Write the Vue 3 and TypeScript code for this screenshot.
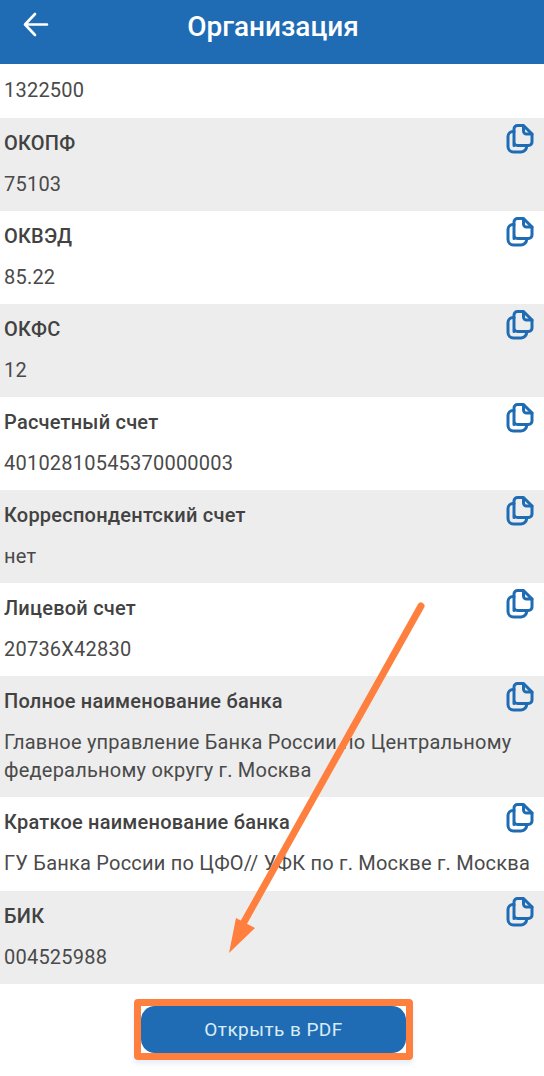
<template>
  <div class="page">
    <!-- HEADER -->
    <header class="header">
      <button class="back" aria-label="Назад">
        <svg width="28" height="28" viewBox="0 0 28 28" fill="none" stroke="#fff" stroke-width="2.6" stroke-linecap="round" stroke-linejoin="round">
          <path d="M25 13.500H3.500M13 3L3 13.500L13 24" />
        </svg>
      </button>
      <h1>Организация</h1>
    </header>

    <!-- FIELDS -->
    <div class="first">1322500</div>
    <div v-for="(row, i) in rows" :key="row.label" class="row" :class="{ shaded: i % 2 === 0 }">
      <div class="row-head">
        <span class="label">{{ row.label }}</span>
        <svg class="copy" width="28" height="30" viewBox="0 0 28 30" fill="none" stroke="#1f6cb5" stroke-width="3" stroke-linejoin="round" stroke-linecap="round">
          <path d="M8 21.500V5a3.500 3.500 0 0 1 3.500-3.500h6L26 10v8a3.500 3.500 0 0 1-3.500 3.500h-11A3.500 3.500 0 0 1 8 18Z" />
          <path d="M17.500 2v5a3 3 0 0 0 3 3H26" />
          <path d="M8 7.500H7A5 5 0 0 0 2 12.500v10A5.500 5.500 0 0 0 7.500 28H15a5.500 5.500 0 0 0 5.500-6.500" />
        </svg>
      </div>
      <div class="value">{{ row.value }}</div>
    </div>

    <!-- ACTIONS -->
    <div class="actions">
      <div class="frame">
        <button class="pdf">Открыть в PDF</button>
      </div>
    </div>

    <!-- ANNOTATION ARROW -->
    <svg class="arrow" width="544" height="1076" viewBox="0 0 544 1076">
      <path d="M421 606L244 922" fill="none" stroke="#ff7f3f" stroke-width="7" stroke-linecap="round" />
      <path d="M229 953L236 918L255 928Z" fill="#ff7f3f" />
    </svg>
  </div>
</template>

<script setup lang="ts">
interface Row {
  label: string;
  value: string;
}

const rows: Row[] = [
  { label: "ОКОПФ", value: "75103" },
  { label: "ОКВЭД", value: "85.22" },
  { label: "ОКФС", value: "12" },
  { label: "Расчетный счет", value: "40102810545370000003" },
  { label: "Корреспондентский счет", value: "нет" },
  { label: "Лицевой счет", value: "20736X42830" },
  {
    label: "Полное наименование банка",
    value: "Главное управление Банка России по Центральному федеральному округу г. Москва",
  },
  {
    label: "Краткое наименование банка",
    value: "ГУ Банка России по ЦФО// УФК по г. Москве г. Москва",
  },
  { label: "БИК", value: "004525988" },
];
</script>

<style>
html,
body {
  background: #fff;
}
</style>

<style scoped>
.page {
  position: relative;
  width: 544px;
  height: 1076px;
  overflow: hidden;
  font-family: Roboto, "Noto Sans", sans-serif;
  color: #4a4a4a;
}

/* HEADER */
.header {
  height: 64px;
  background: #1f6cb5;
  display: flex;
  align-items: center;
  justify-content: center;
  position: relative;
  padding-bottom: 12px;
  box-sizing: border-box;
}

.header h1 {
  margin: 0 0 0 2px;
  font-size: 28px;
  font-weight: 500;
  color: #fff;
}

.back {
  position: absolute;
  left: 22px;
  top: 11px;
  padding: 0;
  background: none;
  border: none;
  display: flex;
}

/* ROWS */
.first {
  height: 54px;
  padding: 13px 4px 0;
  box-sizing: border-box;
  font-size: 20px;
  line-height: 26px;
  letter-spacing: 0.22px;
}

.row {
  padding: 11px 11px 13px 4px;
  min-height: 93px;
  box-sizing: border-box;
}

.row:nth-child(10) {
  padding-bottom: 14px;
}

.shaded {
  background: #ededed;
}

.row-head {
  display: flex;
  justify-content: space-between;
  align-items: flex-start;
  height: 28px;
  margin-bottom: 13px;
}

.label {
  font-size: 20px;
  font-weight: 500;
  line-height: 28px;
  letter-spacing: 0.22px;
  color: #424242;
}

.copy {
  margin-top: -5px;
  margin-right: -1px;
}

.value {
  font-size: 20px;
  line-height: 28px;
  letter-spacing: 0.22px;
  margin-right: -8px;
}

/* ACTIONS */
.actions {
  display: flex;
  justify-content: center;
  padding-top: 15px;
}

.frame {
  width: 279px;
  height: 61px;
  box-sizing: border-box;
  border: 7px solid #ff7f3f;
  border-radius: 4px;
  margin-left: 3px;
  box-shadow: 0 4px 4px rgba(31, 108, 181, 0.1);
}

.pdf {
  display: block;
  width: 100%;
  height: 100%;
  border: none;
  border-radius: 14px;
  background: #1f6cb5;
  color: #d8ecf5;
  font-family: inherit;
  font-size: 19px;
  letter-spacing: 0.45px;
}

/* ARROW */
.arrow {
  position: absolute;
  left: 0;
  top: 0;
  pointer-events: none;
}
</style>
